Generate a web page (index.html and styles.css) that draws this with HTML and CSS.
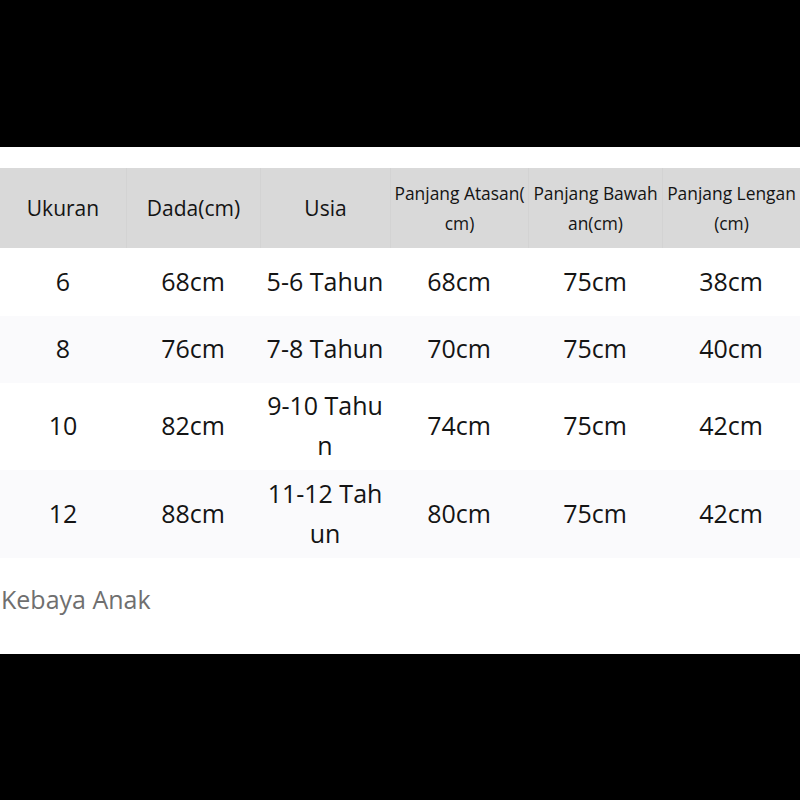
FILE: index.html
```html
<!DOCTYPE html>
<html>
<head>
<meta charset="utf-8">
<link rel="stylesheet" href="styles.css">
</head>
<body>
<div class="bar"></div>
<div class="sheet">
  <div class="table">
    <div class="row head">
      <div class="cell big">Ukuran</div>
      <div class="cell big">Dada(cm)</div>
      <div class="cell big">Usia</div>
      <div class="cell small">Panjang Atasan(<br>cm)</div>
      <div class="cell small">Panjang Bawah<br>an(cm)</div>
      <div class="cell small">Panjang Lengan<br>(cm)</div>
    </div>
    <div class="row r1">
      <div class="cell">6</div><div class="cell">68cm</div><div class="cell">5-6 Tahun</div><div class="cell">68cm</div><div class="cell">75cm</div><div class="cell">38cm</div>
    </div>
    <div class="row r2 alt">
      <div class="cell">8</div><div class="cell">76cm</div><div class="cell">7-8 Tahun</div><div class="cell">70cm</div><div class="cell">75cm</div><div class="cell">40cm</div>
    </div>
    <div class="row r3">
      <div class="cell">10</div><div class="cell">82cm</div><div class="cell">9-10 Tahu<br>n</div><div class="cell">74cm</div><div class="cell">75cm</div><div class="cell">42cm</div>
    </div>
    <div class="row r4 alt">
      <div class="cell">12</div><div class="cell">88cm</div><div class="cell">11-12 Tah<br>un</div><div class="cell">80cm</div><div class="cell">75cm</div><div class="cell">42cm</div>
    </div>
  </div>
  <div class="caption">Kebaya Anak</div>
</div>
</body>
</html>
```

FILE: styles.css
```css
html, body {
  margin: 0;
  padding: 0;
  background: #000;
  width: 800px;
  height: 800px;
  overflow: hidden;
}
.bar {
  height: 147px;
  background: #000;
}
.sheet {
  background: #fff;
  height: 507px;
  padding-top: 21px;
  box-sizing: border-box;
  font-family: "Open Sans", "Noto Sans", sans-serif;
  color: #141414;
}
.table {
  display: flex;
  flex-direction: column;
}
.row {
  display: grid;
  grid-template-columns: 126px 134px 130px 138px 134px 138px;
}
.cell {
  display: flex;
  align-items: center;
  justify-content: center;
  text-align: center;
  font-size: 25px;
  line-height: 40px;
  white-space: nowrap;
  padding-bottom: 3px;
  box-sizing: border-box;
}
.head {
  height: 80px;
  background: #d9d9d9;
}
.head .cell {
  padding-bottom: 0;
}
.head .cell + .cell {
  border-left: 1px solid #d3d3d3;
}
.head .big {
  font-size: 21px;
}
.head .small {
  font-size: 17.4px;
  line-height: 30px;
}
.r1 { height: 68px; }
.r2 { height: 67px; }
.r3 { height: 87px; }
.r4 { height: 88px; }
.alt { background: #fafafc; }
.caption {
  margin-top: 26px;
  padding-left: 1px;
  font-size: 25px;
  line-height: 30px;
  color: #6f6f6f;
}
```
